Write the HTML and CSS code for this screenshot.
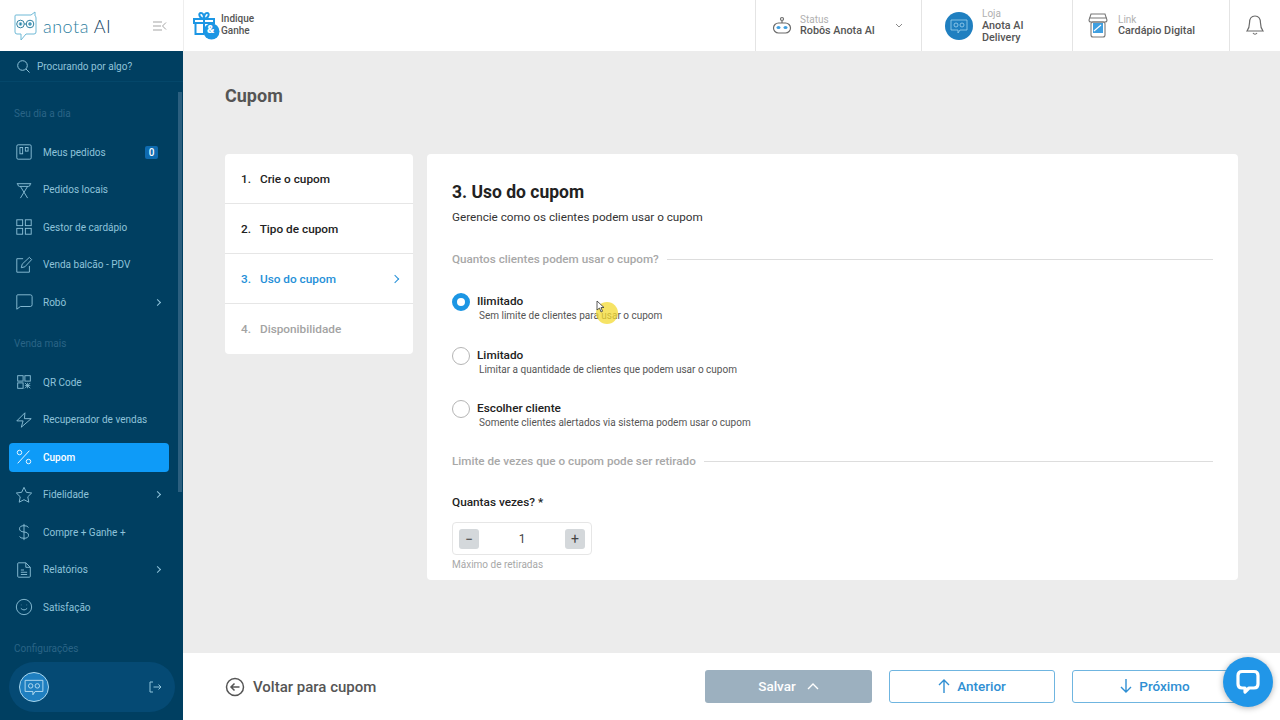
FILE: index.html
```html
<!DOCTYPE html>
<html lang="pt-BR">
<head>
    <meta charset="UTF-8">
    <title>Cupom - Anota AI</title>
    <link rel="stylesheet" href="styles.css">
</head>
<body>

<header class="topbar">
    <div class="brand">
        <svg class="brand-logo" width="23" height="30" viewBox="0 0 23 30" fill="none" stroke="#6fb9d6" stroke-width="1">
            <path d="M2 4 L17 4 L21 1 L21 5 Q22 5 22 7 L22 21 Q22 23 20 23 L12 23 L7 29 L7 23 L3 23 Q1 23 1 21 L1 5 Q1 4 2 4 Z"/>
            <circle cx="6.500" cy="13" r="3.800" stroke="#2f7f9f"/>
            <circle cx="16" cy="13" r="3.800" stroke="#2f7f9f"/>
            <circle cx="6.500" cy="13" r="1.400" fill="#2f7f9f"/>
            <circle cx="16" cy="13" r="1.400" fill="#2f7f9f"/>
            <path d="M10.300 13 H12.200" stroke="#2f7f9f"/>
        </svg>
        <span class="brand-name">anota <b>AI</b></span>
        <svg class="brand-toggle" width="14" height="10" viewBox="0 0 14 10" fill="none" stroke="#a5a5a5" stroke-width="1">
            <path d="M0 1 H9 M0 5 H8 M0 9 H9 M13 1.500 L9.500 5 L13 8.500"/>
        </svg>
    </div>
    <div class="invite">
        <svg width="28" height="28" viewBox="0 0 28 28" fill="none" stroke="#1c96e4" stroke-width="2">
            <path d="M1 7 H21 V11 H1 Z M2.500 11 V22 H11 M11 7 V22 M11 7 C6 6 5 1 8 1 C10 1 11 4 11 7 C11 4 12 1 14 1 C17 1 16 6 11 7 M19 11 V13"/>
            <circle cx="18.500" cy="19.500" r="8" fill="#1c96e4" stroke="none"/>
        </svg>
        <span class="invite-amp">&amp;</span>
        <span class="invite-text">Indique<br>Ganhe</span>
    </div>
    <div class="top-spacer"></div>
    <div class="top-cell status-cell">
        <svg width="20" height="20" viewBox="0 0 20 20" fill="none" stroke="#6b6b6b" stroke-width="1.200">
            <circle cx="10" cy="3" r="1.500"/>
            <path d="M10 5 V7"/>
            <rect x="1.500" y="7" width="17" height="10" rx="5"/>
            <ellipse cx="6.500" cy="11.500" rx="2" ry="1.500" fill="#3f9fe0" stroke="none"/>
            <ellipse cx="13.500" cy="11.500" rx="2" ry="1.500" fill="#3f9fe0" stroke="none"/>
        </svg>
        <div class="top-text">
            <small>Status</small>
            <strong>Robôs Anota AI</strong>
        </div>
        <svg class="status-arrow" width="8" height="5" viewBox="0 0 8 5" fill="none" stroke="#8a8a8a">
            <path d="M1 1 L4 4 L7 1"/>
        </svg>
    </div>
    <div class="top-cell shop-cell">
        <div class="owl-badge">
            <svg width="18" height="18" viewBox="0 0 18 18" fill="none" stroke="#9fd3ee" stroke-width="0.800">
                <path d="M1 3 H17 V13 H10 L8 16 V13 H1 Z"/>
                <circle cx="6" cy="8" r="2"/>
                <circle cx="12" cy="8" r="2"/>
            </svg>
        </div>
        <div class="top-text">
            <small>Loja</small>
            <strong>Anota AI<br>Delivery</strong>
        </div>
    </div>
    <div class="top-cell link-cell">
        <svg width="20" height="25" viewBox="0 0 20 25" fill="none" stroke="#777" stroke-width="1.100">
            <path d="M3 1 H17 L19 7 Q19 9 17 9 H3 Q1 9 1 7 Z M1 5 H19"/>
            <rect x="3" y="9" width="14" height="15" rx="2"/>
            <rect x="5" y="10" width="10" height="10" fill="#3f9fe0" stroke="none"/>
            <path d="M6 18 L13 12" stroke="#fff"/>
        </svg>
        <div class="top-text">
            <small>Link</small>
            <strong>Cardápio Digital</strong>
        </div>
    </div>
    <div class="bell-cell">
        <svg width="18" height="21" viewBox="0 0 18 21" fill="none" stroke="#6b6b6b" stroke-width="1.200">
            <path d="M9 1 C5 1 3.500 4 3.500 8 C3.500 12 2.500 14 1 16 H17 C15.500 14 14.500 12 14.500 8 C14.500 4 13 1 9 1 Z"/>
            <path d="M7 18 Q9 20.500 11 18"/>
        </svg>
    </div>
</header>

<div class="layout">
    <aside class="sidebar">
        <div class="search">
            <svg width="13" height="13" viewBox="0 0 13 13" fill="none" stroke="#8fc3da" stroke-width="1">
                <circle cx="5.500" cy="5.500" r="4.800"/>
                <path d="M9 9 L12.500 12.500"/>
            </svg>
            <span>Procurando por algo?</span>
        </div>
        <div class="scroll-thumb"></div>

        <div class="nav-title first">Seu dia a dia</div>
        <a class="nav-item">
            <svg class="nav-icon" viewBox="0 0 20 20"><rect x="2" y="2" width="16" height="16" rx="1.500"/><rect x="5.500" y="5" width="3" height="7"/><rect x="11.500" y="5" width="3" height="4"/></svg>
            <span>Meus pedidos</span>
            <em class="nav-count">0</em>
        </a>
        <a class="nav-item">
            <svg class="nav-icon" viewBox="0 0 20 20"><path d="M2 3 H18 M3 3 Q3 6 5 6 H15 Q17 6 17 3 M6 6 L14 19 M14 6 L6 19"/></svg>
            <span>Pedidos locais</span>
        </a>
        <a class="nav-item">
            <svg class="nav-icon" viewBox="0 0 20 20"><rect x="2" y="2" width="6.500" height="6.500"/><rect x="11.500" y="2" width="6.500" height="6.500"/><rect x="2" y="11.500" width="6.500" height="6.500"/><rect x="11.500" y="11.500" width="6.500" height="6.500"/></svg>
            <span>Gestor de cardápio</span>
        </a>
        <a class="nav-item">
            <svg class="nav-icon" viewBox="0 0 20 20"><path d="M9 3 H2 V18 H16 V11 M7 13 L8 9 L16 1.500 L18.500 4 L11 12 Z"/></svg>
            <span>Venda balcão - PDV</span>
        </a>
        <a class="nav-item">
            <svg class="nav-icon" viewBox="0 0 20 20"><path d="M3 2 H17 Q19 2 19 4 V13 Q19 15 17 15 H6 L2 18 V3 Q2 2 3 2 Z"/></svg>
            <span>Robô</span>
            <i class="nav-arrow"></i>
        </a>

        <div class="nav-title">Venda mais</div>
        <a class="nav-item">
            <svg class="nav-icon" viewBox="0 0 20 20"><rect x="3" y="3" width="6" height="6"/><rect x="11" y="3" width="6" height="6"/><rect x="3" y="11" width="6" height="6"/><path d="M11 11 L17 17 M17 11 L11 17 M14 11 V17 M11 14 H17" stroke-width="0.900"/></svg>
            <span>QR Code</span>
        </a>
        <a class="nav-item">
            <svg class="nav-icon" viewBox="0 0 20 20"><path d="M11 2 L2 11 H9 L7 18 L18 8.500 H10.500 Z"/></svg>
            <span>Recuperador de vendas</span>
        </a>
        <a class="nav-item active">
            <svg class="nav-icon" viewBox="0 0 20 20"><circle cx="5" cy="5" r="2.500"/><circle cx="15" cy="15" r="2.500"/><path d="M16 3 L3 17"/></svg>
            <span>Cupom</span>
        </a>
        <a class="nav-item">
            <svg class="nav-icon" viewBox="0 0 20 20"><path d="M10 1.500 L12.600 7 L18.500 7.800 L14.200 12 L15.300 18 L10 15.200 L4.700 18 L5.800 12 L1.500 7.800 L7.400 7 Z"/></svg>
            <span>Fidelidade</span>
            <i class="nav-arrow"></i>
        </a>
        <a class="nav-item">
            <svg class="nav-icon" viewBox="0 0 20 20"><path d="M10 1 V19 M15 5 Q14 3 10 3 Q5 3 5 6.500 Q5 9.500 10 10 Q15 10.500 15 13.500 Q15 17 10 17 Q6 17 5 15"/></svg>
            <span>Compre + Ganhe +</span>
        </a>
        <a class="nav-item">
            <svg class="nav-icon" viewBox="0 0 20 20"><path d="M4 2 H12 L17 7 V17 Q17 18 16 18 H4 Q3 18 3 17 V3 Q3 2 4 2 Z M12 2 V7 H17 M6.500 10 H10 M6.500 12.500 H13.500 M6.500 15 H13.500"/></svg>
            <span>Relatórios</span>
            <i class="nav-arrow"></i>
        </a>
        <a class="nav-item">
            <svg class="nav-icon" viewBox="0 0 20 20"><circle cx="10" cy="10" r="8.500"/><path d="M6.500 11.500 Q10 15 13.500 11.500 M7 7.500 V8 M13 7.500 V8"/></svg>
            <span>Satisfação</span>
        </a>
        <div class="nav-title">Configurações</div>

        <div class="user-pill">
            <div class="user-avatar">
                <svg width="20" height="20" viewBox="0 0 18 18" fill="none" stroke="#bfe2f4" stroke-width="0.800">
                    <path d="M1 3 H17 V13 H10 L8 16 V13 H1 Z"/>
                    <circle cx="6" cy="8" r="2"/>
                    <circle cx="12" cy="8" r="2"/>
                </svg>
            </div>
            <svg width="13" height="12" viewBox="0 0 13 12" fill="none" stroke="#8fc3da" stroke-width="1">
                <path d="M4 1 H1 V11 H4 M4.500 6 H12 M9.500 3.500 L12 6 L9.500 8.500"/>
            </svg>
        </div>
    </aside>

    <main class="main">
        <div class="content">
            <h1 class="page-title">Cupom</h1>
            <div class="panels">
                <ul class="steps">
                    <li><b>1.</b> Crie o cupom</li>
                    <li><b>2.</b> Tipo de cupom</li>
                    <li class="current"><b>3.</b> Uso do cupom <i class="step-arrow"></i></li>
                    <li class="disabled"><b>4.</b> Disponibilidade</li>
                </ul>
                <section class="card">
                    <h2>3. Uso do cupom</h2>
                    <p class="card-sub">Gerencie como os clientes podem usar o cupom</p>

                    <div class="divider">Quantos clientes podem usar o cupom?</div>

                    <div class="option checked">
                        <span class="radio"></span>
                        <div>
                            <strong>Ilimitado</strong>
                            <small>Sem limite de clientes para usar o cupom</small>
                        </div>
                    </div>
                    <div class="option">
                        <span class="radio"></span>
                        <div>
                            <strong>Limitado</strong>
                            <small>Limitar a quantidade de clientes que podem usar o cupom</small>
                        </div>
                    </div>
                    <div class="option last">
                        <span class="radio"></span>
                        <div>
                            <strong>Escolher cliente</strong>
                            <small>Somente clientes alertados via sistema podem usar o cupom</small>
                        </div>
                    </div>

                    <div class="divider second">Limite de vezes que o cupom pode ser retirado</div>

                    <div class="field-label">Quantas vezes? *</div>
                    <div class="stepper">
                        <button>−</button>
                        <span>1</span>
                        <button>+</button>
                    </div>
                    <div class="field-hint">Máximo de retiradas</div>
                </section>
            </div>
        </div>

        <footer class="footer">
            <a class="back">
                <svg width="20" height="20" viewBox="0 0 20 20" fill="none" stroke="#555" stroke-width="1.500">
                    <circle cx="10" cy="10" r="8.500"/>
                    <path d="M14.500 10 H6 M9.500 6.500 L6 10 L9.500 13.500"/>
                </svg>
                Voltar para cupom
            </a>
            <button class="btn save">Salvar
                <svg width="12" height="7" viewBox="0 0 12 7" fill="none" stroke="#fff" stroke-width="1.400"><path d="M1 6 L6 1 L11 6"/></svg>
            </button>
            <button class="btn outline">
                <svg width="12" height="14" viewBox="0 0 12 14" fill="none" stroke="#2f8fd3" stroke-width="1.400"><path d="M6 14 V1 M1 6 L6 1 L11 6"/></svg>
                Anterior
            </button>
            <button class="btn outline">
                <svg width="12" height="14" viewBox="0 0 12 14" fill="none" stroke="#2f8fd3" stroke-width="1.400"><path d="M6 0 V13 M1 8 L6 13 L11 8"/></svg>
                Próximo
            </button>
        </footer>
    </main>
</div>

<!-- cursor da gravacao -->
<div class="cursor-glow"></div>
<svg class="cursor" width="9" height="13" viewBox="0 0 9 13" fill="#fff" stroke="#333" stroke-width="0.800">
    <path d="M1 1 L1 10 L3.500 8 L5 12 L6.500 11.300 L5 7.500 L8 7.500 Z"/>
</svg>

<div class="chat-bubble">
    <svg width="24" height="26" viewBox="0 0 24 26" fill="none" stroke="#fff" stroke-width="3.200">
        <path d="M6 2.500 H18 Q22 2.500 22 6.500 V15 Q22 19 18 19 H13 L9 23 V19 H6 Q2 19 2 15 V6.500 Q2 2.500 6 2.500 Z" stroke-linejoin="round"/>
    </svg>
</div>

</body>
</html>
```

FILE: styles.css
```css
* {
    box-sizing: border-box;
}
html, body {
    margin: 0;
    height: 720px;
    overflow: hidden;
}
body {
    font-family: Roboto, "Liberation Sans", sans-serif;
    background-color: #ececec;
    color: #222222;
}

/* topo */
.topbar {
    display: flex;
    height: 51px;
    background-color: #ffffff;
}
.brand {
    display: flex;
    align-items: center;
    width: 183px;
    padding-left: 14px;
}
.brand-name {
    margin-left: 6px;
    font-family: Lato, sans-serif;
    font-size: 18px;
    font-weight: 300;
    letter-spacing: 0.5px;
    color: #2f7f9f;
}
.brand-name b {
    font-weight: 300;
    color: #12425f;
}
.brand-toggle {
    margin-left: auto;
    margin-right: 16px;
}
.invite {
    display: flex;
    align-items: center;
    position: relative;
    width: 150px;
    padding-left: 9px;
    border-left: 1px solid #eeeeee;
}
.invite-amp {
    position: absolute;
    left: 23px;
    top: 23px;
    font-size: 11px;
    font-weight: 900;
    line-height: 14px;
    color: #ffffff;
}
.invite-text {
    margin-left: 0;
    font-size: 10px;
    font-weight: 500;
    line-height: 12px;
    color: #555555;
    padding-bottom: 1px;
}
.top-spacer {
    flex: 1;
}
.top-cell {
    display: flex;
    align-items: center;
    border-left: 1px solid #e4e4e4;
}
.status-cell {
    width: 166px;
    padding-left: 16px;
}
.shop-cell {
    width: 151px;
    padding-left: 23px;
}
.link-cell {
    width: 157px;
    padding-left: 15px;
}
.top-text {
    margin-left: 8px;
}
.shop-cell .top-text {
    margin-left: 9px;
    padding-top: 1px;
}
.shop-cell .top-text strong {
    margin-top: 1px;
}
.link-cell .top-text {
    margin-left: 10px;
}
.top-text small {
    display: block;
    font-size: 10px;
    line-height: 11px;
    color: #b0b0b0;
}
.top-text strong {
    display: block;
    font-size: 10.800px;
    font-weight: 500;
    line-height: 12px;
    color: #555555;
}
.status-arrow {
    margin-left: 20px;
}
.owl-badge {
    display: flex;
    align-items: center;
    justify-content: center;
    width: 28px;
    height: 28px;
    border-radius: 50%;
    background-color: #1f7fc0;
}
.bell-cell {
    display: flex;
    align-items: center;
    justify-content: center;
    width: 51px;
    border-left: 1px solid #e4e4e4;
}

.layout {
    display: flex;
    height: 669px;
}

/* menu lateral */
.sidebar {
    position: relative;
    width: 183px;
    height: 669px;
    overflow: hidden;
    background-color: #003f61;
    color: #8fc3da;
}
.search {
    display: flex;
    align-items: center;
    gap: 7px;
    height: 31px;
    padding-left: 17px;
    font-size: 10px;
    border-bottom: 1px solid #04476a;
}
.scroll-thumb {
    position: absolute;
    right: 1px;
    top: 41px;
    width: 4px;
    height: 400px;
    background-color: #2b5f7f;
}
.nav-title {
    height: 20px;
    margin: 12.250px 0 10.250px;
    padding-left: 14px;
    font-size: 10px;
    line-height: 21px;
    color: #2a6486;
}
.nav-title.first {
    margin-top: 21px;
}
.nav-item {
    display: flex;
    align-items: center;
    height: 37.500px;
    padding-left: 15px;
    font-size: 10px;
}
.nav-icon {
    width: 18px;
    height: 18px;
    margin-right: 10px;
    fill: none;
    stroke: #8fc3da;
    stroke-width: 1;
}
.nav-count {
    margin-left: auto;
    margin-right: 25px;
    width: 13px;
    height: 13px;
    border-radius: 2px;
    background-color: #0e6bb0;
    color: #ffffff;
    font-size: 10px;
    font-style: normal;
    font-weight: 500;
    line-height: 13px;
    text-align: center;
}
.nav-arrow {
    margin-left: auto;
    margin-right: 23px;
    width: 5px;
    height: 5px;
    border-top: 1px solid #8fc3da;
    border-right: 1px solid #8fc3da;
    transform: rotate(45deg);
}
.nav-item.active {
    position: relative;
    width: 160px;
    height: 29px;
    margin: 4.250px 0 4.250px 9px;
    padding-left: 6px;
    border-radius: 4px;
    background-color: #0e9bf8;
    color: #ffffff;
    font-weight: 500;
}
.nav-item.active .nav-icon {
    stroke: #ffffff;
}
.user-pill {
    position: absolute;
    left: 9px;
    bottom: 8px;
    display: flex;
    align-items: center;
    justify-content: space-between;
    width: 166px;
    height: 50px;
    padding: 0 13px 0 10px;
    border-radius: 25px;
    background-color: #054a74;
}
.user-avatar {
    display: flex;
    align-items: center;
    justify-content: center;
    width: 30px;
    height: 30px;
    border: 1px solid #a9d7ee;
    border-radius: 50%;
    background-color: #1f7fc0;
}

/* conteudo */
.main {
    flex: 1;
    display: flex;
    flex-direction: column;
}
.content {
    flex: 1;
    padding: 32px 42px 0;
}
.page-title {
    margin: 0 0 45px;
    font-size: 18px;
    font-weight: 700;
    line-height: 26px;
    color: #555555;
}
.panels {
    display: flex;
    align-items: flex-start;
    gap: 14px;
}
.steps {
    width: 188px;
    margin: 0;
    padding: 0;
    list-style: none;
    background-color: #ffffff;
    border-radius: 4px;
}
.steps li {
    position: relative;
    height: 50px;
    padding-left: 16px;
    font-size: 11.800px;
    font-weight: 500;
    line-height: 51px;
    color: #222222;
    border-bottom: 1px solid #e6e6e6;
}
.steps li:last-child {
    border-bottom: 0;
}
.steps b {
    display: inline-block;
    width: 16px;
    font-weight: 500;
}
.steps .current {
    color: #2590d8;
}
.steps .disabled {
    color: #a3a3a3;
}
.step-arrow {
    position: absolute;
    right: 15px;
    top: 22px;
    width: 6px;
    height: 6px;
    border-top: 1px solid #2590d8;
    border-right: 1px solid #2590d8;
    transform: rotate(45deg);
}
.card {
    flex: 1;
    height: 426px;
    padding: 26px 25px 0;
    background-color: #ffffff;
    border-radius: 4px;
}
.card h2 {
    margin: 0;
    font-size: 17.500px;
    font-weight: 700;
    line-height: 24px;
    color: #222222;
}
.card-sub {
    margin: 5px 0 0;
    font-size: 11.700px;
    line-height: 16px;
    color: #333333;
}
.divider {
    display: flex;
    align-items: center;
    gap: 8px;
    height: 16px;
    margin-top: 26px;
    font-size: 11.700px;
    font-weight: 500;
    color: #a8a8a8;
}
.divider::after {
    content: "";
    flex: 1;
    height: 1px;
    background-color: #dddddd;
}
.divider.second {
    margin-top: 23px;
}
.option {
    display: flex;
    height: 30px;
    margin-bottom: 23.500px;
}
.option.last {
    margin-bottom: 0;
}
.divider + .option {
    margin-top: 26px;
}
.radio {
    flex: none;
    width: 18px;
    height: 18px;
    margin: 0 7px 0 0;
    border: 1px solid #b5b5b5;
    border-radius: 50%;
}
.option.checked .radio {
    border: 5px solid #1c96e4;
}
.option strong {
    display: block;
    font-size: 11.800px;
    font-weight: 500;
    line-height: 16px;
    color: #222222;
}
.option small {
    display: block;
    margin: 0 0 0 2px;
    font-size: 10px;
    line-height: 14px;
    color: #555555;
}
.field-label {
    margin-top: 25px;
    font-size: 11.800px;
    font-weight: 500;
    line-height: 16px;
    color: #222222;
}
.stepper {
    display: flex;
    align-items: center;
    justify-content: space-between;
    width: 140px;
    height: 33px;
    margin-top: 12px;
    padding: 0 6px;
    border: 1px solid #e6e6e6;
    border-radius: 4px;
    font-size: 12px;
    color: #444444;
}
.stepper button {
    width: 20px;
    height: 20px;
    padding: 0;
    border: 0;
    border-radius: 3px;
    background-color: #d4d8db;
    font-family: inherit;
    font-size: 14px;
    line-height: 20px;
    color: #444444;
}
.field-hint {
    margin-top: 3px;
    font-size: 10px;
    line-height: 14px;
    color: #a8a8a8;
}

/* rodape */
.footer {
    display: flex;
    align-items: center;
    gap: 17px;
    height: 67px;
    padding: 0 42px;
    background-color: #ffffff;
}
.back {
    display: flex;
    align-items: center;
    gap: 8px;
    margin-right: auto;
    font-size: 15px;
    font-weight: 500;
    line-height: 20px;
    color: #555555;
}
.btn {
    display: flex;
    align-items: center;
    justify-content: center;
    gap: 7px;
    width: 166px;
    height: 33px;
    padding: 0 0 1px;
    border-radius: 3px;
    font-family: inherit;
    font-size: 13.500px;
    font-weight: 500;
}
.btn.save {
    width: 167px;
    gap: 11px;
    border: 0;
    background-color: #9cb0bf;
    color: #ffffff;
}
.btn.outline {
    background-color: #ffffff;
    border: 1px solid #6fb5e0;
    color: #2f8fd3;
}

/* por cima da tela */
.cursor-glow {
    position: absolute;
    left: 596px;
    top: 302px;
    width: 22px;
    height: 22px;
    border-radius: 50%;
    background-color: rgba(243, 217, 50, 0.75);
}
.cursor {
    position: absolute;
    left: 596px;
    top: 300px;
}
.chat-bubble {
    position: absolute;
    left: 1223px;
    top: 657px;
    display: flex;
    align-items: center;
    justify-content: center;
    width: 50px;
    height: 50px;
    border-radius: 50%;
    background-color: #2196e8;
    box-shadow: 0 1px 6px rgba(0, 0, 0, 0.3);
}
```
